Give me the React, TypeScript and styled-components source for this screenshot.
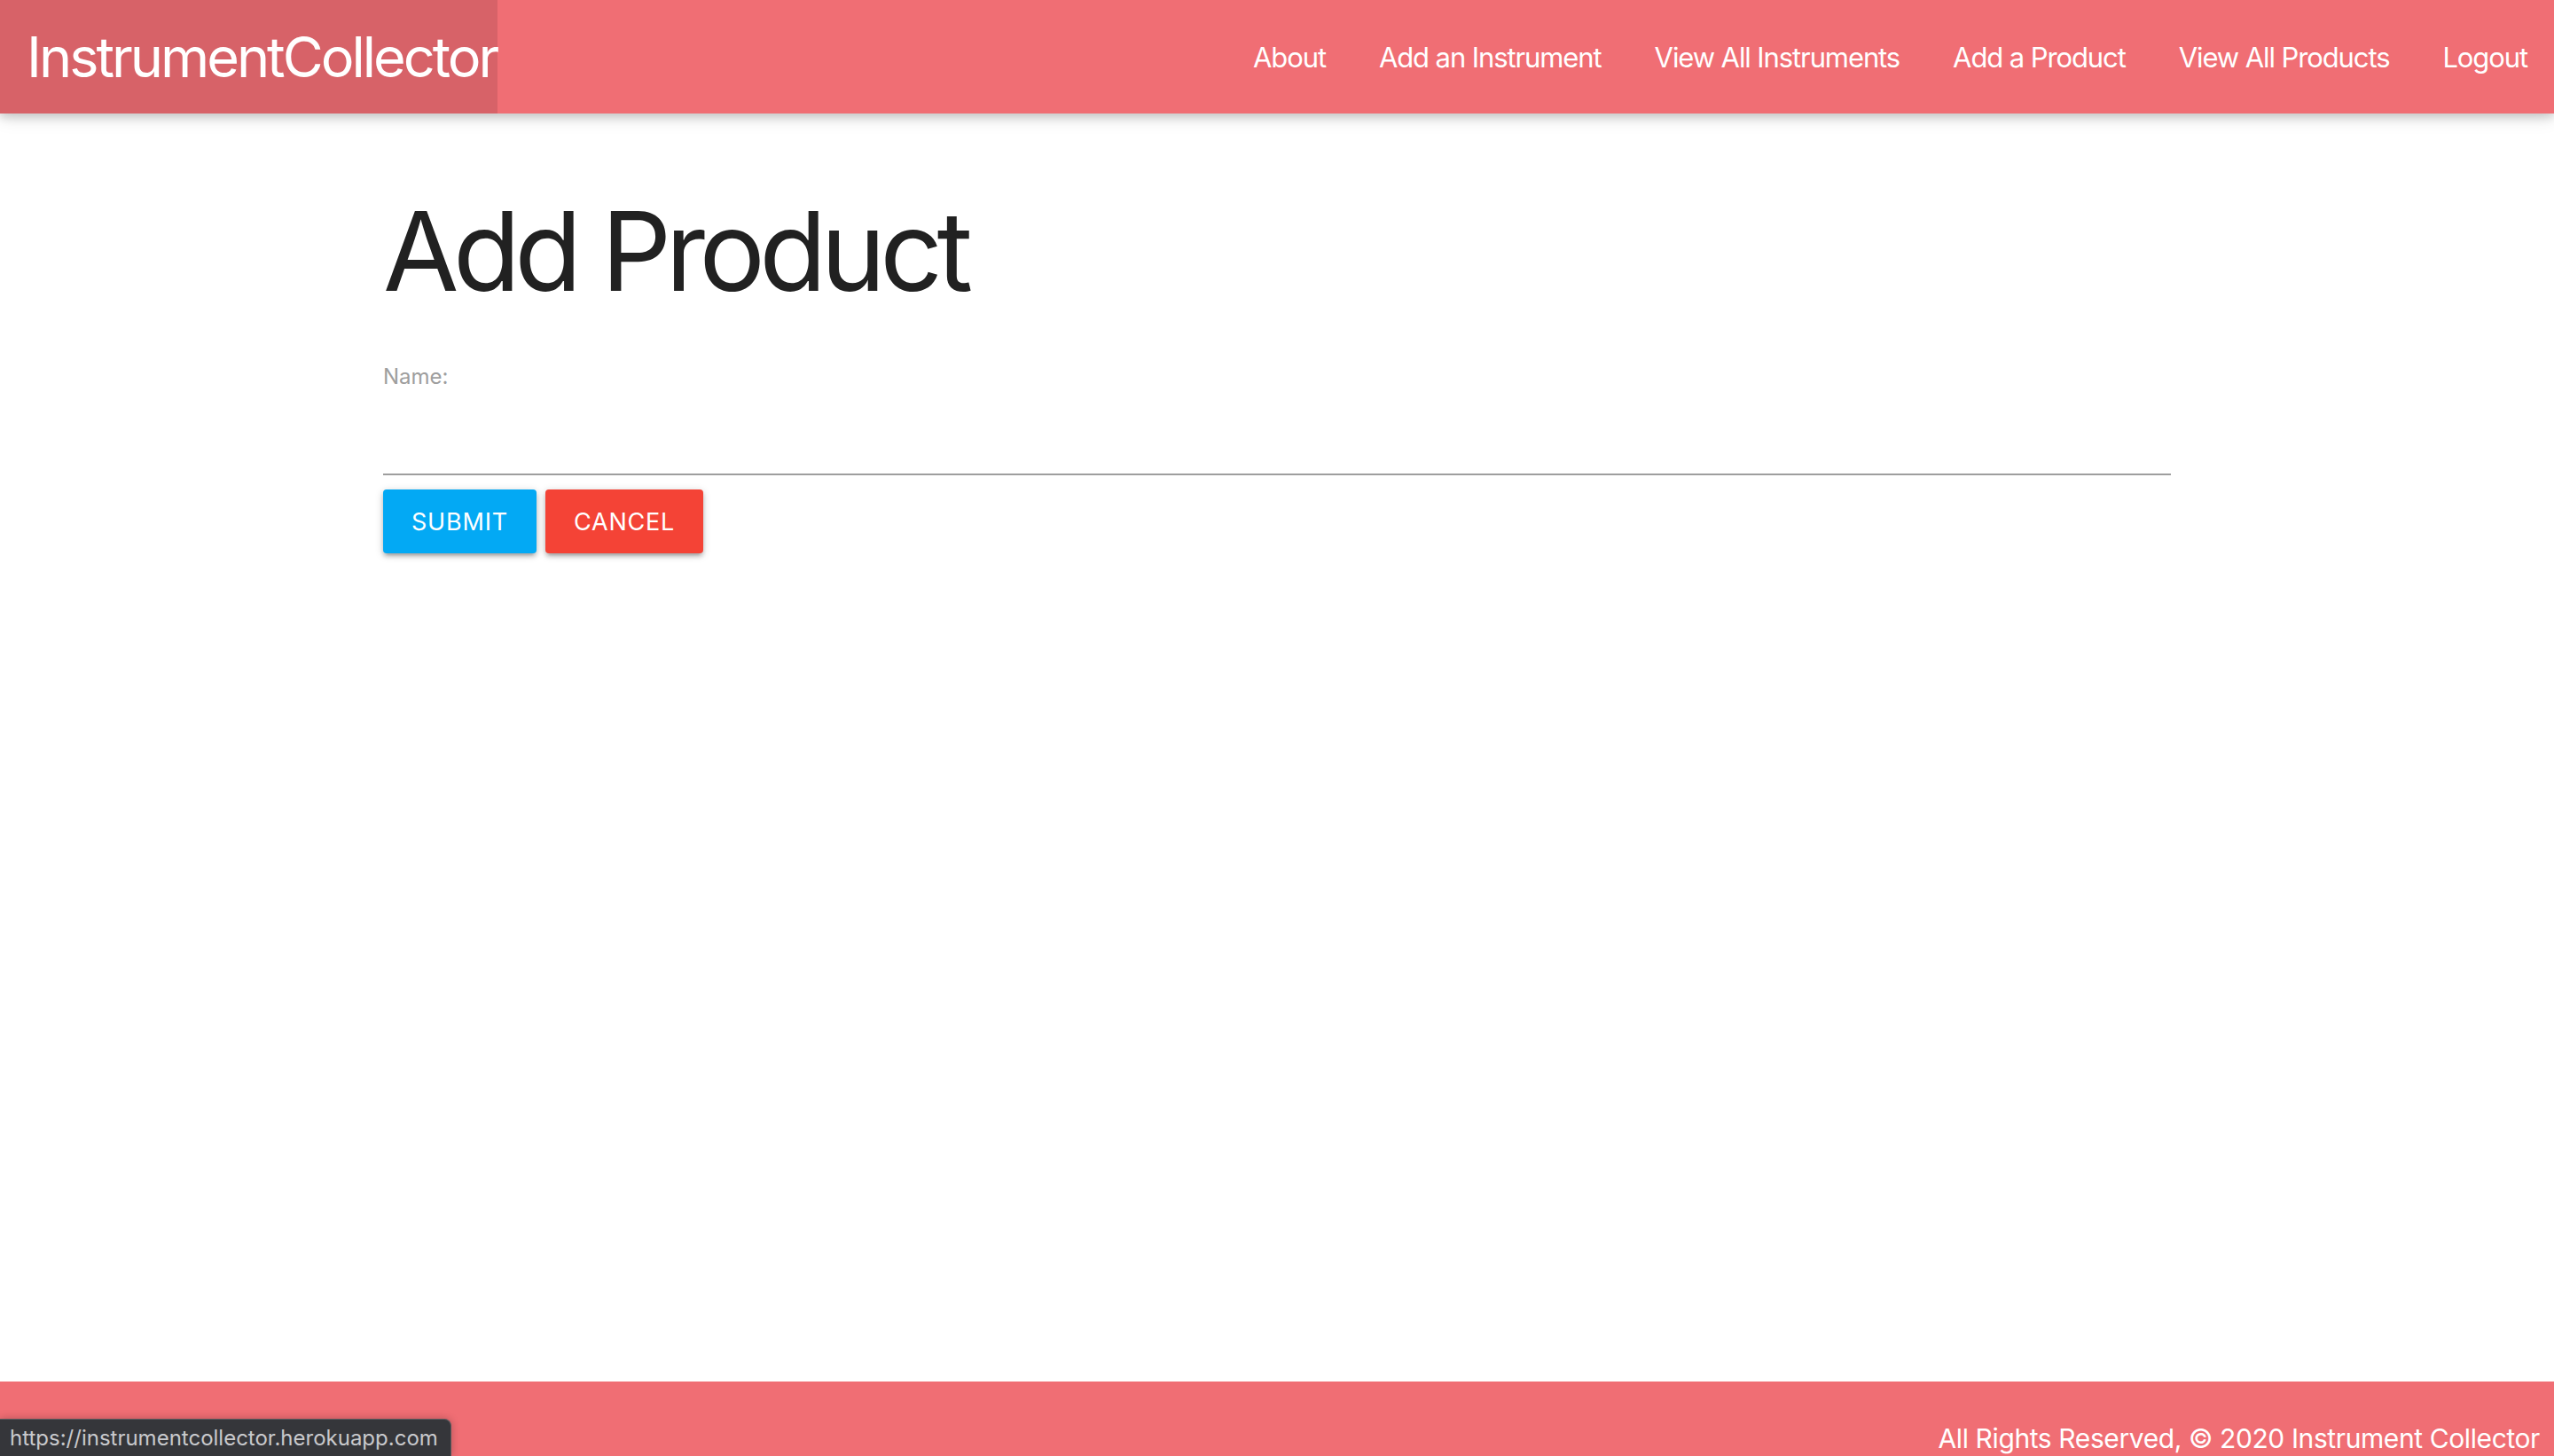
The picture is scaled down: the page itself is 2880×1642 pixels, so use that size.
import React from "react";
import styled, { createGlobalStyle } from "styled-components";

const Global = createGlobalStyle`
  html, body { margin: 0; padding: 0; background: #ffffff; overflow: hidden; }
  body { font-family: Inter, "Noto Sans", Roboto, sans-serif; color: rgba(0,0,0,0.87); }
  * { box-sizing: border-box; }
`;

const Page = styled.div`
  display: flex;
  flex-direction: column;
  height: 1642px;
  position: relative;
`;

const Nav = styled.nav`
  display: flex;
  align-items: stretch;
  justify-content: space-between;
  height: 128px;
  background: #f06e74;
  box-shadow: 0 4px 10px 0 rgba(0,0,0,0.16), 0 4px 20px 0 rgba(0,0,0,0.12);
  position: relative;
  z-index: 2;
`;

const Brand = styled.a`
  display: flex;
  align-items: center;
  width: 561px;
  padding-left: 30px;
  background: rgba(0, 0, 0, 0.1);
  color: #ffffff;
  font-size: 63px;
  letter-spacing: -3px;
  text-decoration: none;
  white-space: nowrap;
`;

const Links = styled.ul`
  display: flex;
  list-style: none;
  margin: 0;
  padding: 0;
`;

const LinkItem = styled.li`
  display: flex;
`;

const NavLink = styled.a`
  display: flex;
  align-items: center;
  padding: 0 30px;
  color: #ffffff;
  font-size: 31px;
  letter-spacing: -1.1px;
  text-decoration: none;
  white-space: nowrap;
`;

const Main = styled.main`
  flex: 1;
  width: 70%;
  margin: 0 auto;
`;

const Title = styled.h1`
  margin: 80px 0 0 0;
  font-size: 124px;
  font-weight: 400;
  line-height: 150px;
  letter-spacing: -6.6px;
  color: #212121;
`;

const Field = styled.div`
  display: flex;
  flex-direction: column;
  margin-top: 52px;
`;

const Label = styled.label`
  font-size: 24px;
  line-height: 30px;
  color: #9e9e9e;
`;

const Input = styled.input`
  height: 96px;
  border: none;
  border-bottom: 2px solid #9e9e9e;
  margin: 0 0 16px 0;
  padding: 0;
  font-size: 32px;
  font-family: inherit;
  background: transparent;
  outline: none;
`;

const Buttons = styled.div`
  display: flex;
  gap: 10px;
`;

const Button = styled.button<{ $color: string }>`
  height: 72px;
  padding: 0 32px;
  border: none;
  border-radius: 4px;
  background: ${(p) => p.$color};
  color: #ffffff;
  font-family: inherit;
  font-size: 27px;
  letter-spacing: 0.8px;
  text-transform: uppercase;
  box-shadow: 0 4px 4px 0 rgba(0,0,0,0.14), 0 6px 2px -4px rgba(0,0,0,0.12), 0 2px 10px 0 rgba(0,0,0,0.2);
  cursor: pointer;
`;

const Footer = styled.footer`
  display: flex;
  justify-content: flex-end;
  align-items: flex-end;
  height: 84px;
  padding: 0 16px 5px 0;
  background: #f06e74;
  color: #ffffff;
  font-size: 30px;
  line-height: 30px;
  letter-spacing: -0.4px;
`;

const StatusBubble = styled.div`
  position: absolute;
  left: 0;
  bottom: 0;
  width: 509px;
  height: 42px;
  padding-left: 11px;
  display: flex;
  align-items: center;
  background: #35363a;
  border-top: 1px solid #5b5b5f;
  border-right: 1px solid #5b5b5f;
  border-top-right-radius: 8px;
  color: #c8c9cc;
  font-size: 24px;
  box-shadow: 0 0 10px rgba(0,0,0,0.25);
  z-index: 3;
`;

const navItems = [
  "About",
  "Add an Instrument",
  "View All Instruments",
  "Add a Product",
  "View All Products",
  "Logout",
];

export default function App() {
  return (
    <Page>
      <Global />
      <Nav>
        <Brand href="#">InstrumentCollector</Brand>
        <Links>
          {navItems.map((item) => (
            <LinkItem key={item}>
              <NavLink href="#">{item}</NavLink>
            </LinkItem>
          ))}
        </Links>
      </Nav>
      <Main>
        <Title>Add Product</Title>
        <Field>
          <Label htmlFor="name">Name:</Label>
          <Input id="name" type="text" />
        </Field>
        <Buttons>
          <Button $color="#03a9f4">Submit</Button>
          <Button $color="#f44336">Cancel</Button>
        </Buttons>
      </Main>
      <Footer>All Rights Reserved, © 2020 Instrument Collector</Footer>
      <StatusBubble>https://instrumentcollector.herokuapp.com</StatusBubble>
    </Page>
  );
}
